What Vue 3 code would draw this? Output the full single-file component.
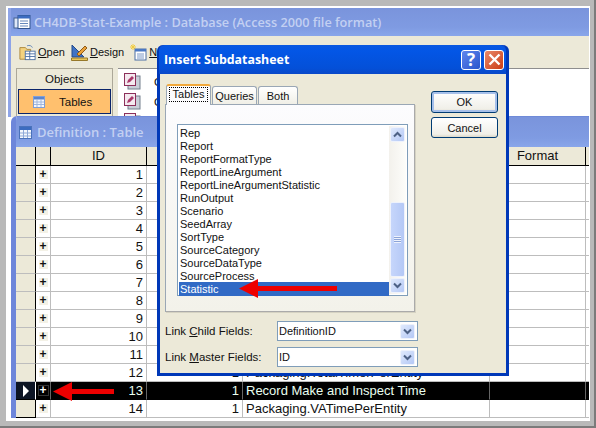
<script setup>
const listItems = [
  'Rep', 'Report', 'ReportFormatType', 'ReportLineArgument', 'ReportLineArgumentStatistic',
  'RunOutput', 'Scenario', 'SeedArray', 'SortType', 'SourceCategory', 'SourceDataType',
  'SourceProcess', 'Statistic'
]

// Rows of the datasheet, most of the text sits behind the dialog
const rows = Array.from({ length: 14 }, (_, i) => ({
  id: i + 1,
  count: i >= 11 ? 1 : '',
  name: '',
  current: false
}))
rows[11].name = 'Packaging.TotalTimerPerEntity'
rows[12].name = 'Record Make and Inspect Time'
rows[12].current = true
rows[13].name = 'Packaging.VATimePerEntity'
</script>

<template>
  <div class="screen">
    <div class="frame"></div>

    <!-- Database window -->
    <section class="win db">
      <header class="title">
        <svg class="title-icon" width="18" height="18" viewBox="0 0 18 18">
          <rect x="1" y="5" width="8" height="10" fill="#dfe8f8" stroke="#44608f" />
          <rect x="5" y="2.5" width="12" height="13" fill="#fff" stroke="#31548f" />
          <rect x="5" y="2.5" width="12" height="3" fill="#3c6cc0" />
          <path d="M7 8h8M7 10.5h8M7 13h8" stroke="#6688bb" />
        </svg>
        <span>CH4DB-Stat-Example : Database (Access 2000 file format)</span>
      </header>
      <div class="tools">
        <span class="tool">
          <svg width="17" height="17" viewBox="0 0 19 17">
            <path d="M1 3h6l2 2h4v11H1z" fill="#f4d27e" stroke="#a8853a" />
            <path d="M9 1c3-1 5 0 6 2" fill="none" stroke="#5a7fb5" />
            <rect x="7" y="7" width="11" height="9.5" fill="#fff" stroke="#4a6ea3" />
            <path d="M7 10h11M12 7v9M7 13h11" stroke="#4a6ea3" />
          </svg>
          <span><u>O</u>pen</span>
        </span>
        <span class="tool">
          <svg width="17" height="17" viewBox="0 0 17 17">
            <path d="M1 1v12h12z" fill="#3f73c4" stroke="#234a8c" />
            <path d="M0.5 14h16v2.5H0.5z" fill="#e8c65a" stroke="#96782a" />
            <path d="M6 10L14 2l2 2-8 8z" fill="#e9a23b" stroke="#8f5a18" />
          </svg>
          <span><u>D</u>esign</span>
        </span>
        <span class="tool">
          <svg width="17" height="17" viewBox="0 0 17 17">
            <path d="M3 0v6M0 3h6M1 1l4 4M5 1L1 5" stroke="#f2cc3c" />
            <rect x="5" y="5" width="11" height="11" fill="#fff" stroke="#4a6ea3" />
            <rect x="5" y="5" width="11" height="2.5" fill="#4a78c4" />
            <path d="M7 10h7M7 12h7M7 14h7" stroke="#7a98c6" />
          </svg>
          <span><u>N</u>ew</span>
        </span>
      </div>
      <div class="db-body">
        <aside class="objects">
          <div class="objects-label">Objects</div>
          <div class="objects-item">
            <svg width="12" height="12" viewBox="0 0 12 12">
              <rect x="0.5" y="0.5" width="11" height="11" fill="#f4f7fd" stroke="#7f9ed6" />
              <rect x="1" y="1" width="10" height="2.5" fill="#5b84cc" />
              <path d="M1 6h10M1 8.5h10M4 3v8M8 3v8" stroke="#9fb6de" />
            </svg>
            <span>Tables</span>
          </div>
        </aside>
        <div class="db-list">
          <div v-for="n in 3" :key="n" class="db-entry">
            <svg width="17" height="17" viewBox="0 0 17 17">
              <rect x="4" y="3" width="12" height="13" fill="#c9cfd8" stroke="#74808e" />
              <rect x="0.5" y="0.5" width="11" height="12" fill="#f4e9ef" stroke="#8c2f5a" />
              <path d="M3 10l1-3 4-4 2 2-4 4z" fill="#a93a6a" />
            </svg>
            <span v-if="n < 3">C</span>
          </div>
        </div>
      </div>
    </section>

    <!-- Table window -->
    <section class="win def">
      <header class="title">
        <svg class="title-icon" width="13" height="13" viewBox="0 0 13 13">
          <rect x="0.5" y="0.5" width="12" height="12" fill="#f4f7fd" stroke="#4a72bb" />
          <rect x="1" y="1" width="11" height="3" fill="#3c6cc0" />
          <path d="M1 7h11M1 10h11M4.5 4v8M8.5 4v8" stroke="#8fa9d8" />
        </svg>
        <span>Definition : Table</span>
      </header>
      <div class="sheet">
        <div class="row head">
          <div class="sel"></div>
          <div class="exp"></div>
          <div class="cell center">ID</div>
          <div class="cell"></div>
          <div class="cell"></div>
          <div class="cell center">Format</div>
          <div class="cell"></div>
        </div>
        <div v-for="r in rows" :key="r.id" class="row" :class="{ current: r.current }">
          <div class="sel"><span v-if="r.current" class="pointer"></span></div>
          <div class="exp"><span class="plus">+</span></div>
          <div class="cell num">{{ r.id }}</div>
          <div class="cell num">{{ r.count }}</div>
          <div class="cell">{{ r.name }}</div>
          <div class="cell"></div>
          <div class="cell"></div>
        </div>
      </div>
    </section>

    <!-- Dialog -->
    <section class="dialog">
      <header class="dlg-title">
        <span>Insert Subdatasheet</span>
        <div class="dlg-btns">
          <span class="cap help">?</span>
          <span class="cap close">
            <svg width="13" height="13" viewBox="0 0 13 13">
              <path d="M1.5 1.5l10 10M11.5 1.5l-10 10" stroke="#fff" stroke-width="2.4" />
            </svg>
          </span>
        </div>
      </header>
      <div class="dlg-body">
        <div class="dlg-main">
          <div class="tabs">
            <span class="tab active"><span class="focus">Tables</span></span>
            <span class="tab q">Queries</span>
            <span class="tab b">Both</span>
          </div>
          <div class="page">
            <div class="listbox">
              <ul class="items">
                <li v-for="item in listItems" :key="item" :class="{ sel2: item === 'Statistic' }">{{ item }}</li>
              </ul>
              <div class="scroll">
                <span class="sb-btn">
                  <svg width="9" height="7" viewBox="0 0 9 7"><path d="M1 5.5l3.5-3.5 3.5 3.5" fill="none" stroke="#4d6185" stroke-width="2" /></svg>
                </span>
                <span class="sb-track">
                  <span class="sb-thumb"><span class="grip"></span></span>
                </span>
                <span class="sb-btn">
                  <svg width="9" height="7" viewBox="0 0 9 7"><path d="M1 1.5l3.5 3.5 3.5-3.5" fill="none" stroke="#4d6185" stroke-width="2" /></svg>
                </span>
              </div>
            </div>
          </div>
          <div class="field first">
            <label>Link <u>C</u>hild Fields:</label>
            <div class="combo">
              <span>DefinitionID</span>
              <span class="sb-btn drop">
                <svg width="9" height="7" viewBox="0 0 9 7"><path d="M1 1.5l3.5 3.5 3.5-3.5" fill="none" stroke="#4d6185" stroke-width="2" /></svg>
              </span>
            </div>
          </div>
          <div class="field">
            <label>Link <u>M</u>aster Fields:</label>
            <div class="combo">
              <span>ID</span>
              <span class="sb-btn drop">
                <svg width="9" height="7" viewBox="0 0 9 7"><path d="M1 1.5l3.5 3.5 3.5-3.5" fill="none" stroke="#4d6185" stroke-width="2" /></svg>
              </span>
            </div>
          </div>
        </div>
        <div class="dlg-side">
          <button class="btn default">OK</button>
          <button class="btn">Cancel</button>
        </div>
      </div>
    </section>

    <!-- Red annotation arrows -->
    <svg class="arrow a1" width="98" height="19" viewBox="0 0 98 19">
      <path d="M0 9.5L19 0v7h79v5H19v7z" fill="#ee0000" />
    </svg>
    <svg class="arrow a2" width="61" height="19" viewBox="0 0 61 19">
      <path d="M0 9.5L19 0v7h42v5H19v7z" fill="#ee0000" />
    </svg>
  </div>
</template>

<style>
html, body {
  margin: 0;
  background: #fff;
}
</style>

<style scoped>
.screen {
  position: relative;
  width: 596px;
  height: 428px;
  overflow: hidden;
  background: #7b7b7b;
  font-family: "Liberation Sans", Arial, sans-serif;
  color: #111;
}

.frame {
  position: absolute;
  left: 0;
  top: 0;
  width: 594px;
  height: 426px;
  box-sizing: border-box;
  background: #fff;
  border-style: solid;
  border-color: #b9b9b9;
  border-width: 6px 4px 5px 6px;
}

.win {
  position: absolute;
  overflow: hidden;
}

.title {
  display: flex;
  align-items: center;
  gap: 3px;
  color: #c3d0f2;
  font-family: "Open Sans", sans-serif;
  font-weight: 600;
  background: linear-gradient(#7a94dc, #7f9be2 70%, #89a6ea);
  box-sizing: border-box;
}

.db {
  left: 8px;
  top: 8px;
  width: 581px;
  height: 109px;
  background: #ece9d8;
  border-left: 3px solid #8ea4e8;
  box-sizing: border-box;
}

.db .title {
  height: 28px;
  margin-left: -3px;
  padding-left: 5px;
  font-size: 12.7px;
}

.tools {
  display: flex;
  gap: 6px;
  height: 32px;
  padding: 6px 0 0 8px;
  box-sizing: border-box;
  font-size: 11px;
}

.tool {
  display: flex;
  align-items: center;
  gap: 2px;
  height: 20px;
}

.db-body {
  display: flex;
  gap: 5px;
  padding-left: 5px;
}

.objects {
  width: 97px;
  height: 60px;
  box-sizing: border-box;
  border: 1px solid #aca899;
  border-bottom: 0;
  padding: 0 1px;
}

.objects-label {
  height: 20px;
  line-height: 20px;
  text-align: center;
  font-size: 11.5px;
}

.objects-item {
  display: flex;
  align-items: center;
  gap: 14px;
  height: 25px;
  padding-left: 14px;
  box-sizing: border-box;
  border: 1px solid #0a246a;
  background: #ffc06e;
  font-size: 11.5px;
}

.db-list {
  flex: 1;
  height: 60px;
  display: flex;
  flex-direction: column;
  gap: 3px;
  padding: 4px 0 0 6px;
  box-sizing: border-box;
  background: #fff;
  border-top: 1px solid #8e8e8e;
  font-size: 11.5px;
}

.db-entry {
  display: flex;
  align-items: center;
  gap: 13px;
  height: 17px;
}

.def {
  left: 11px;
  top: 116px;
  width: 578px;
  height: 302px;
  background: #fff;
  border-left: 5px solid #6d86da;
  border-radius: 6px 0 0 0;
  box-sizing: border-box;
}

.def .title {
  height: 31px;
  margin-left: -5px;
  padding-left: 8px;
  gap: 5px;
  font-size: 13px;
  border-top: 1px solid #6f8ad8;
}

.sheet {
  background: #fff;
  height: 271px;
  overflow: hidden;
  font-size: 13px;
}

.row {
  display: grid;
  grid-template-columns: 20px 15px 96px 96px 247px 96px 1fr;
  height: 18px;
}

.row > div {
  box-sizing: border-box;
  border-right: 1px solid #bdbdbd;
  border-bottom: 1px solid #bdbdbd;
  line-height: 18px;
  padding: 0 3px;
  white-space: nowrap;
  overflow: hidden;
}

.row.head {
  height: 19px;
  background: #ece9d8;
}

.row.head > div {
  border-right-color: #000;
  border-bottom-color: #000;
}

.row .sel {
  background: #ece9d8;
  padding: 0;
  border-right-color: #000;
}

.row:last-child .sel {
  border-bottom-color: #000;
}

.row .exp {
  display: flex;
  align-items: center;
  justify-content: center;
  padding: 0;
  background: #fff;
}

.head .exp {
  background: #ece9d8;
}

.plus {
  width: 9px;
  height: 9px;
  line-height: 9px;
  text-align: center;
  background: #f3f1e6;
  font-size: 12px;
  font-weight: 700;
}

.center {
  text-align: center;
}

.num {
  text-align: right;
}

.row.current {
  background: #000;
  color: #eafff0;
}

.row.current > div {
  border-right-color: #666;
  border-bottom-color: #000;
}

.row.current .exp {
  background: #000;
}

.row.current .plus {
  background: #000;
  color: #fff;
  outline: 1px solid #333;
}

.row.current .sel {
  background: #0c1424;
  border-right-color: #fff;
  display: flex;
  align-items: center;
  justify-content: center;
}

.pointer {
  width: 0;
  height: 0;
  border-left: 6px solid #fff;
  border-top: 6px solid transparent;
  border-bottom: 6px solid transparent;
}

.dialog {
  position: absolute;
  left: 157px;
  top: 45px;
  width: 352px;
  height: 331px;
  display: flex;
  flex-direction: column;
  box-sizing: border-box;
  border-radius: 6px 6px 0 0;
  background: #0a44c4;
  border: 2px solid #0038b8;
  border-right-width: 3px;
  border-top: 0;
  font-size: 11.5px;
}

.dlg-title {
  display: flex;
  align-items: center;
  justify-content: space-between;
  height: 29px;
  padding: 0 2px 0 5px;
  flex: none;
  background: linear-gradient(#0a58e0 0, #0356e6 20%, #0450d8 80%, #0a48c8);
  border-radius: 6px 6px 0 0;
  color: #fff;
  font-family: "Open Sans", sans-serif;
  font-weight: 700;
  font-size: 12.4px;
}

.dlg-btns {
  display: flex;
  gap: 3px;
}

.cap {
  display: flex;
  align-items: center;
  justify-content: center;
  width: 20px;
  height: 20px;
  box-sizing: border-box;
  border: 1px solid #fff;
  border-radius: 3px;
  color: #fff;
}

.help {
  background: linear-gradient(135deg, #5f86ee, #2a55cc);
  font-size: 17px;
  font-weight: 700;
}

.close {
  background: linear-gradient(135deg, #e8896a, #cc3c14);
}

.dlg-body {
  flex: 1;
  display: flex;
  background: #ece9d8;
  border-left: 1px solid #0038b8;
  border-bottom: 1px solid #0038b8;
}

.dlg-main {
  width: 258px;
  box-sizing: border-box;
  padding: 10px 0 0 5px;
}

.tabs {
  display: flex;
  align-items: flex-end;
  height: 20px;
  padding-left: 1px;
  gap: 1px;
  font-size: 11px;
}

.tab {
  height: 18px;
  line-height: 18px;
  box-sizing: border-box;
  border: 1px solid #9aa7b5;
  border-bottom: 0;
  border-radius: 3px 3px 0 0;
  background: linear-gradient(#fff, #f0efe6);
  text-align: center;
}

.tab.q {
  width: 45px;
}

.tab.b {
  width: 40px;
}

.tab.active {
  width: 45px;
  height: 21px;
  margin-bottom: -1px;
  position: relative;
  background: #fcfcfe;
  border-top: 2px solid #f2a93b;
  padding: 1px 2px;
}

.focus {
  display: block;
  height: 15px;
  line-height: 14px;
  outline: 1px dotted #000;
  outline-offset: -1px;
}

.page {
  height: 208px;
  margin-right: 3px;
  box-sizing: border-box;
  border: 1px solid #9aa7b5;
  border-right-color: #aaa;
  border-bottom-color: #aaa;
  background: linear-gradient(#fcfcfe, #f3f2ea);
  box-shadow: 1px 1px 0 #d5d2c2;
  padding: 19px 6px 0 11px;
}

.listbox {
  display: flex;
  height: 172px;
  box-sizing: border-box;
  border: 1px solid #7f9db9;
  background: #fff;
  padding: 1px;
}

.items {
  flex: 1;
  margin: 0;
  padding: 0;
  list-style: none;
}

.items li {
  height: 13px;
  line-height: 15px;
  padding-left: 1px;
  font-size: 11px;
}

.items li.sel2 {
  background: #316ac5;
  color: #fff;
  height: 14px;
}

.scroll {
  width: 17px;
  display: flex;
  flex-direction: column;
  background: linear-gradient(90deg, #f3f1ec, #fdfdfa);
}

.sb-btn {
  flex: none;
  display: flex;
  align-items: center;
  justify-content: center;
  width: 15px;
  height: 15px;
  margin: 1px;
  box-sizing: border-box;
  border: 1px solid #eef2fc;
  border-radius: 2px;
  background: linear-gradient(135deg, #dfe9fc, #b4c8f6);
}

.sb-track {
  flex: 1;
  display: flex;
  flex-direction: column;
  justify-content: flex-end;
}

.sb-thumb {
  display: flex;
  align-items: center;
  justify-content: center;
  height: 75px;
  margin: 0 1px;
  box-sizing: border-box;
  border: 1px solid #eef2fc;
  border-radius: 2px;
  background: linear-gradient(90deg, #c6d6fb, #b4c8f6);
}

.grip {
  width: 7px;
  height: 7px;
  background: repeating-linear-gradient(#eef2fc 0 1px, #8ca4d8 1px 2px);
}

.field {
  display: flex;
  align-items: center;
  height: 20px;
  margin-top: 6px;
}

.field.first {
  margin-top: 9px;
}

.field label {
  width: 112px;
  flex: none;
}

.combo {
  display: flex;
  align-items: center;
  justify-content: space-between;
  width: 141px;
  height: 20px;
  flex: none;
  box-sizing: border-box;
  border: 1px solid #7f9db9;
  background: #fff;
  padding-left: 1px;
  font-size: 11px;
}

.drop {
  margin: 0 2px 0 0;
}

.dlg-side {
  display: flex;
  flex-direction: column;
  gap: 4px;
  padding: 17px 0 0 13px;
}

.btn {
  width: 67px;
  height: 21px;
  padding: 0;
  box-sizing: border-box;
  border: 1px solid #003c74;
  border-radius: 3px;
  background: linear-gradient(#fff, #f0efe8 85%, #dcd8c8);
  font: 11px "Liberation Sans", Arial, sans-serif;
  color: #111;
}

.btn.default {
  height: 22px;
  box-shadow: inset 0 0 0 2px #a6c0ea;
}

.arrow {
  position: absolute;
}

.a1 {
  left: 239px;
  top: 279px;
}

.a2 {
  left: 53px;
  top: 382px;
}
</style>
